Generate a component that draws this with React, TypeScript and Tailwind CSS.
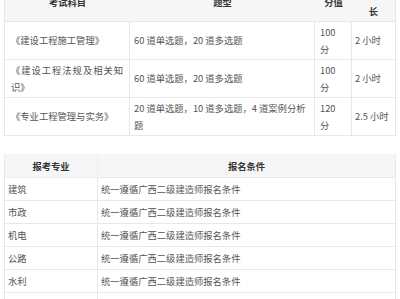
const exams = [
  { subject: "《建设工程施工管理》", type: "60 道单选题，20 道多选题", score: "100 分", time: "2 小时" },
  { subject: "《建设工程法规及相关知识》", type: "60 道单选题，20 道多选题", score: "100 分", time: "2 小时" },
  { subject: "《专业工程管理与实务》", type: "20 道单选题，10 道多选题，4 道案例分析题", score: "120 分", time: "2.5 小时" },
];

const majors = ["建筑", "市政", "机电", "公路", "水利", "矿业"];

const th = "flex items-center justify-center text-center bg-[#f6f6f6] border-b border-[#e8e8e8] px-[5px] py-[2px] font-bold text-[#333]";
const td = "flex items-center border-r border-b border-[#e8e8e8] py-[2px] text-[#555]";

export default function App() {
  return (
    <div className="w-[400px] h-[299px] overflow-hidden bg-white px-[4px] text-[9.3px] leading-[16.5px] font-['Noto_Sans_CJK_SC',sans-serif]">
      {/* 考试科目表 */}
      <div className="-mt-[16px] grid grid-cols-[125px_185px_37px_44px] border-l border-[#e8e8e8]">
        <div className={th}>考试科目</div>
        <div className={th}>题型</div>
        <div className={th}>分值</div>
        <div className={`${th} border-r`}>考试时长</div>
        {exams.map((row) => (
          <div key={row.subject} className="contents">
            <div className={`${td} px-[6px]`}>
              <p className="w-full text-justify [text-align-last:left]">{row.subject}</p>
            </div>
            <div className={`${td} px-[4px]`}>{row.type}</div>
            <div className={`${td} px-[5px]`}>{row.score}</div>
            <div className={`${td} px-[3px]`}>{row.time}</div>
          </div>
        ))}
      </div>

      {/* 报考条件表 */}
      <div className="mt-[18px] grid grid-cols-[93px_1fr] border-l border-[#e8e8e8] leading-[16px]">
        <div className="flex items-center justify-center bg-[#f6f6f6] border-r border-b border-[#efefef] py-[3.5px] font-bold text-[#333]">报考专业</div>
        <div className="flex items-center justify-center bg-[#f6f6f6] border-r border-b border-[#e8e8e8] py-[3.5px] font-bold text-[#333]">报名条件</div>
        {majors.map((m) => (
          <div key={m} className="contents">
            <div className="border-r border-b border-[#e8e8e8] px-[3px] py-[3px] text-[#555]">{m}</div>
            <div className="border-r border-b border-[#e8e8e8] px-[3px] py-[3px] text-[#555]">统一遵循广西二级建造师报名条件</div>
          </div>
        ))}
      </div>
    </div>
  );
}
